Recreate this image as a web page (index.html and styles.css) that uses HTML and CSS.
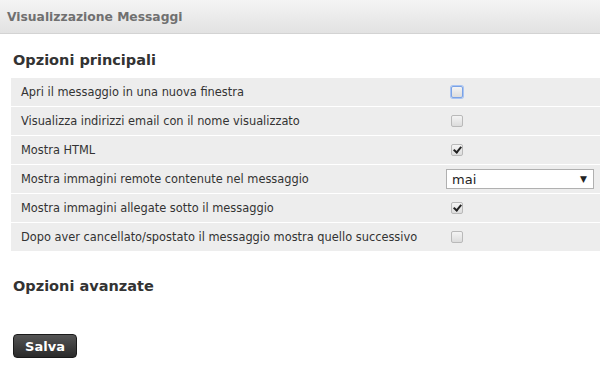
FILE: index.html
```html
<!DOCTYPE html>
<html lang="it">
<head>
<meta charset="utf-8">
<title>Visualizzazione Messaggi</title>
<link rel="stylesheet" href="styles.css">
</head>
<body>
<div class="header">Visualizzazione Messaggi</div>
<div class="content">
  <h2 class="section-title">Opzioni principali</h2>
  <div class="rows">
    <div class="row">
      <div class="label">Apri il messaggio in una nuova finestra</div>
      <div class="control"><span class="cb focus"></span></div>
    </div>
    <div class="row">
      <div class="label">Visualizza indirizzi email con il nome visualizzato</div>
      <div class="control"><span class="cb"></span></div>
    </div>
    <div class="row">
      <div class="label">Mostra HTML</div>
      <div class="control"><span class="cb checked"></span></div>
    </div>
    <div class="row">
      <div class="label">Mostra immagini remote contenute nel messaggio</div>
      <div class="control"><div class="select"><span>mai</span><span class="arrow">▼</span></div></div>
    </div>
    <div class="row">
      <div class="label">Mostra immagini allegate sotto il messaggio</div>
      <div class="control"><span class="cb checked"></span></div>
    </div>
    <div class="row">
      <div class="label">Dopo aver cancellato/spostato il messaggio mostra quello successivo</div>
      <div class="control"><span class="cb"></span></div>
    </div>
  </div>
  <h2 class="section-title adv">Opzioni avanzate</h2>
  <button class="btn">Salva</button>
</div>
</body>
</html>
```
FILE: styles.css
```css
html, body {
  margin: 0;
  padding: 0;
  background: #fff;
}
body {
  font-family: "DejaVu Sans", Verdana, sans-serif;
  color: #333;
  width: 600px;
  height: 369px;
  overflow: hidden;
}
.header {
  height: 34px;
  box-sizing: border-box;
  padding: 0 7px;
  display: flex;
  align-items: center;
  font-size: 12.3px;
  font-weight: bold;
  color: #707070;
  background: linear-gradient(#f4f4f4, #e2e2e2);
  border-bottom: 1px solid #d3d3d3;
}
.content {
  padding: 0 0 0 11px;
}
.section-title {
  margin: 0;
  padding: 17px 0 0 2px;
  height: 28px;
  box-sizing: border-box;
  font-size: 14.5px;
  font-weight: bold;
  color: #333;
  line-height: 18px;
}
.rows {
  display: flex;
  flex-direction: column;
  gap: 1px;
  margin-top: 16px;
}
.row {
  display: flex;
  align-items: center;
  height: 28px;
  background: #ededed;
}
.label {
  width: 425px;
  padding-left: 10px;
  font-size: 11.4px;
  color: #333;
}
.control {
  flex: 1;
  display: flex;
  align-items: center;
}
.cb {
  width: 10px;
  height: 10px;
  margin-left: 5px;
  border: 1px solid #b9b9b9;
  border-radius: 2px;
  background: linear-gradient(#f4f4f4, #dcdcdc);
  position: relative;
}
.cb.focus {
  border-color: #7aa2e6;
  box-shadow: 0 0 0 1px #a9c4f2;
}
.cb.checked::after {
  content: "";
  position: absolute;
  left: 3px;
  top: 0px;
  width: 3px;
  height: 6px;
  border: solid #222;
  border-width: 0 2px 2px 0;
  transform: rotate(40deg);
}
.select {
  width: 148px;
  height: 20px;
  box-sizing: border-box;
  border: 1px solid #b0b0b0;
  background: #fff;
  display: flex;
  align-items: center;
  justify-content: space-between;
  padding: 0 6px 0 5px;
  font-size: 13px;
  color: #222;
}
.arrow {
  font-size: 9px;
}
.adv {
  padding-top: 26px;
}
.btn {
  margin: 55px 0 0 2px;
  width: 64px;
  height: 24px;
  border: 1px solid #1a1a1a;
  border-radius: 4px;
  background: linear-gradient(#555, #2a2a2a);
  color: #fff;
  font-family: "DejaVu Sans", Verdana, sans-serif;
  font-weight: bold;
  font-size: 13px;
  padding: 0;
}
```
